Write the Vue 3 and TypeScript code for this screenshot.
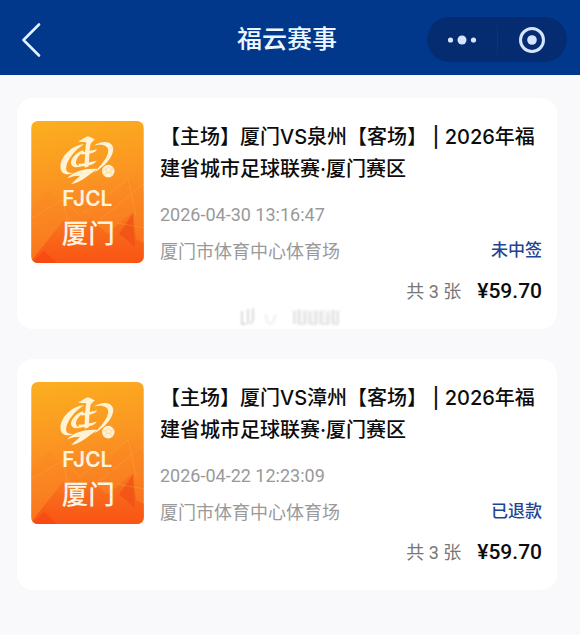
<script setup lang="ts">
interface Order {
  id: number
  title: string
  time: string
  venue: string
  status: string
  count: number
  price: string
  marked: boolean
}

const orders: Order[] = [
  {
    id: 1,
    title: '【主场】厦门VS泉州【客场】 | 2026年福建省城市足球联赛·厦门赛区',
    time: '2026-04-30 13:16:47',
    venue: '厦门市体育中心体育场',
    status: '未中签',
    count: 3,
    price: '59.70',
    marked: true,
  },
  {
    id: 2,
    title: '【主场】厦门VS漳州【客场】 | 2026年福建省城市足球联赛·厦门赛区',
    time: '2026-04-22 12:23:09',
    venue: '厦门市体育中心体育场',
    status: '已退款',
    count: 3,
    price: '59.70',
    marked: false,
  },
]
</script>

<template>
  <div class="page">
    <header class="bar">
      <button class="back" type="button" aria-label="返回">
        <svg width="20" height="34" viewBox="0 0 20 34">
          <path d="M18 1.500 2.500 17 18 32.500" fill="none" stroke="#e4f2ff" stroke-width="2.600" stroke-linecap="round" stroke-linejoin="round" />
        </svg>
      </button>
      <h1 class="heading">福云赛事</h1>
      <div class="capsule">
        <button type="button" aria-label="更多">
          <svg width="30" height="10" viewBox="0 0 30 10">
            <circle cx="3.500" cy="5" r="2.600" />
            <circle cx="15" cy="5" r="4.500" />
            <circle cx="26.500" cy="5" r="2.600" />
          </svg>
        </button>
        <span class="divider"></span>
        <button type="button" aria-label="关闭">
          <svg width="28" height="28" viewBox="0 0 28 28">
            <circle class="ring" cx="14" cy="14" r="11.500" />
            <circle cx="14" cy="14" r="4.800" />
          </svg>
        </button>
      </div>
    </header>

    <main class="list">
      <article v-for="order in orders" :key="order.id" class="card">
        <svg class="poster" viewBox="33 33 339 428" aria-hidden="true">
          <defs>
            <linearGradient :id="`sky-${order.id}`" x1="0" y1="0" x2="0.150" y2="1">
              <stop offset="0" stop-color="#fbb01f" />
              <stop offset="0.450" stop-color="#fb9622" />
              <stop offset="0.780" stop-color="#fa7f22" />
              <stop offset="1" stop-color="#f9641c" />
            </linearGradient>
            <linearGradient :id="`peak-${order.id}`" x1="0" y1="0" x2="0" y2="1">
              <stop offset="0" stop-color="#f4601a" stop-opacity="0.250" />
              <stop offset="1" stop-color="#fa4f12" stop-opacity="0.850" />
            </linearGradient>
          </defs>
          <rect x="33" y="33" width="339" height="428" :fill="`url(#sky-${order.id})`" />
          <path d="M33 300 85 242 125 290 165 275 230 320 325 208 372 250V461H33Z" fill="#f8861f" opacity="0.350" />
          <path d="M33 455 128 335 160 372 215 330 262 372 338 308 350 390 372 400V461H33Z" :fill="`url(#peak-${order.id})`" />
          <path d="M298 372 340 310 345 412Z" fill="#ee4a15" opacity="0.600" />
          <path d="M33 461 72 424 110 461Z" fill="#f7430f" opacity="0.600" />
          <path d="M35 325 128 270 180 318 325 208 350 322M240 330 372 222M128 270 142 335M290 340 372 355" fill="none" stroke="#ffc15a" stroke-width="2" opacity="0.350" />
          <g fill="#fff3d3">
            <path d="M174 94C185 91 192 83 203 79C211 80 216 85 225 89C217 92 217 99 211 102C202 104 197 101 197 96C188 96 181 97 174 94Z" />
            <path d="M192 103C154 106 122 140 121 170C120 191 139 200 160 189C148 191 137 187 138 175C140 149 166 119 192 103Z" />
            <path d="M222 107C245 91 277 93 280 115C282 140 253 172 222 188C244 166 266 141 265 121C264 106 242 102 222 107Z" />
            <path d="M190 121C165 128 148 151 154 164C158 174 174 174 184 170C174 169 167 165 168 156C170 143 180 133 190 127Z" />
            <path d="M182 126C196 127 213 122 231 118C227 128 212 132 184 134Z" />
            <path d="M175 162C194 162 212 157 230 153C224 164 210 168 177 171Z" />
            <path d="M198 100 212 99C208 124 208 143 206 170L194 174C194 147 195 125 198 100Z" />
            <path d="M141 206C162 184 198 174 235 178C222 183 213 193 197 203C183 212 169 221 153 223C162 214 171 208 180 198C166 198 155 200 141 206Z" />
            <circle cx="265" cy="184" r="19" />
          </g>
          <path d="m258 178 8-5 8 6-3 9h-10Zm-10 4 10-4m3 10-6 8m16-8 6 7m-3-16 9-2" fill="none" stroke="#fbcf8a" stroke-width="2" />
          <text class="league" x="202" y="290" text-anchor="middle">FJCL</text>
          <text class="city" x="205" y="400" text-anchor="middle">厦门</text>
        </svg>

        <div class="info">
          <h2 class="title">{{ order.title }}</h2>
          <time class="time">{{ order.time }}</time>
          <div class="place">
            <span class="venue">{{ order.venue }}</span>
            <span class="status">{{ order.status }}</span>
          </div>
          <div class="total">
            <span class="count">共 {{ order.count }} 张</span>
            <strong class="price">¥{{ order.price }}</strong>
          </div>
        </div>

        <svg v-if="order.marked" class="smudge" width="104" height="24" viewBox="0 0 104 24" aria-hidden="true">
          <g fill="none" stroke="#8b8b8b" stroke-width="2">
            <path d="M4 6v13h4M10 4v15M15 3v11l-2 5" opacity="0.300" />
            <path d="M28 9c0 13 8 13 9 1" opacity="0.150" />
            <path d="M56 6v13M61 4v15h6V6M72 7v12h6V6M83 6v13h7V8M95 5v14h5V6" opacity="0.180" />
          </g>
          <path d="M55 5h46v14H55Z" fill="#999" opacity="0.100" />
        </svg>
      </article>
    </main>
  </div>
</template>

<style>
body {
  margin: 0;
  background: #f9f9fb;
}
</style>

<style scoped>
.page {
  min-height: 100vh;
  background: #f9f9fb;
  color: #0c0c0c;
  font-family: Roboto, "Noto Sans CJK SC", sans-serif;
}

button {
  display: flex;
  align-items: center;
  justify-content: center;
  padding: 0;
  border: 0;
  background: none;
  cursor: pointer;
}

.bar {
  display: grid;
  grid-template-columns: 1fr auto 1fr;
  align-items: center;
  box-sizing: border-box;
  height: 75px;
  padding: 4px 13px 0 7px;
  background: #01388c;
}

.back {
  width: 48px;
  height: 48px;
}

.heading {
  margin: 0;
  color: #eef7ff;
  font-size: 25px;
  font-weight: 500;
  line-height: 36px;
}

.capsule {
  display: flex;
  align-items: center;
  justify-self: end;
  width: 140px;
  height: 45px;
  border-radius: 23px;
  background: #052c70;
}

.capsule button {
  flex: 1;
  height: 100%;
}

.capsule svg {
  fill: #d5e4ff;
}

.capsule .ring {
  fill: none;
  stroke: #d5e4ff;
  stroke-width: 3;
}

.divider {
  width: 1px;
  height: 28px;
  background: #0b3378;
}

.list {
  display: flex;
  flex-direction: column;
  gap: 30px;
  padding: 23px 23px 32px 17px;
}

.card {
  position: relative;
  display: flex;
  align-items: flex-start;
  gap: 16px;
  padding: 23px 15px 22px 14px;
  border-radius: 16px;
  background: #fff;
}

.poster {
  flex: none;
  width: 113px;
  height: 142px;
  border-radius: 7px;
}

.league {
  fill: #fff3dc;
  font-family: Inter, sans-serif;
  font-size: 63px;
  font-weight: 600;
}

.city {
  fill: #fff3e4;
  font-size: 80px;
  font-weight: 500;
}

.info {
  flex: 1;
  min-width: 0;
}

.title {
  margin: 0 0 16px;
  font-family: Inter, "Noto Sans CJK SC", sans-serif;
  font-size: 20px;
  font-weight: 500;
  line-height: 32px;
}

.time {
  display: block;
  color: #999;
  font-size: 18px;
  line-height: 28px;
}

.place {
  display: flex;
  align-items: flex-start;
  justify-content: space-between;
  margin-top: 7px;
}

.venue {
  color: #999;
  font-size: 18px;
  line-height: 32px;
}

.status {
  color: #1f4594;
  font-size: 17px;
  font-weight: 500;
  line-height: 28px;
}

.total {
  display: flex;
  align-items: baseline;
  justify-content: flex-end;
  gap: 16px;
  margin-top: 8px;
  line-height: 30px;
}

.count {
  color: #777;
  font-size: 18px;
}

.price {
  font-size: 21px;
  font-weight: 500;
}

.smudge {
  position: absolute;
  left: 221px;
  bottom: 0;
  filter: blur(1px);
}
</style>
